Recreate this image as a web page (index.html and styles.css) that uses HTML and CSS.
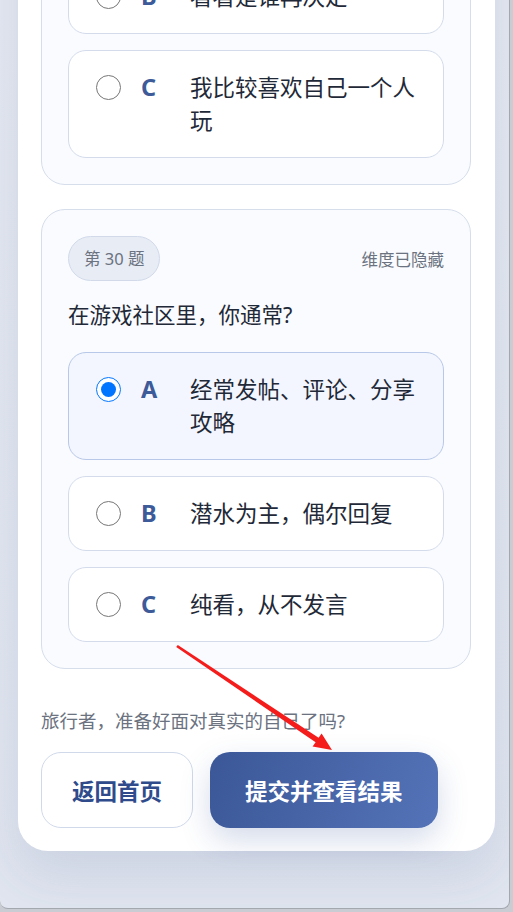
FILE: index.html
```html
<!DOCTYPE html>
<html lang="zh-CN">
<head>
    <meta charset="UTF-8">
    <meta name="viewport" content="width=device-width, initial-scale=1.0">
    <title>旅行者性格测试</title>
    <link rel="stylesheet" href="styles.css">
</head>
<body>

    <div class="window">
        <div class="panel">

            <!-- 第 29 题 -->
            <div class="question-card">
                <div class="q-head">
                    <div class="q-num">第 29 题</div>
                    <div class="q-dim">维度已隐藏</div>
                </div>
                <div class="q-text">组队打副本时，你更倾向于？</div>
                <div class="options">
                    <label class="option">
                        <input type="radio" name="q29">
                        <span class="opt-letter">A</span>
                        <span class="opt-text">主动担任指挥</span>
                    </label>
                    <label class="option">
                        <input type="radio" name="q29">
                        <span class="opt-letter">B</span>
                        <span class="opt-text">看看是谁再决定</span>
                    </label>
                    <label class="option">
                        <input type="radio" name="q29">
                        <span class="opt-letter">C</span>
                        <span class="opt-text">我比较喜欢自己一个人玩</span>
                    </label>
                </div>
            </div>

            <!-- 第 30 题 -->
            <div class="question-card">
                <div class="q-head">
                    <div class="q-num">第 30 题</div>
                    <div class="q-dim">维度已隐藏</div>
                </div>
                <div class="q-text">在游戏社区里，你通常?</div>
                <div class="options">
                    <label class="option selected">
                        <input type="radio" name="q30" checked>
                        <span class="opt-letter">A</span>
                        <span class="opt-text">经常发帖、评论、分享攻略</span>
                    </label>
                    <label class="option">
                        <input type="radio" name="q30">
                        <span class="opt-letter">B</span>
                        <span class="opt-text">潜水为主，偶尔回复</span>
                    </label>
                    <label class="option">
                        <input type="radio" name="q30">
                        <span class="opt-letter">C</span>
                        <span class="opt-text">纯看，从不发言</span>
                    </label>
                </div>
            </div>

            <p class="hint">旅行者，准备好面对真实的自己了吗?</p>

            <div class="actions">
                <button class="btn btn-back">返回首页</button>
                <button class="btn btn-submit">提交并查看结果</button>
            </div>
        </div>

        <!-- 红色标注箭头 -->
        <svg class="arrow" width="513" height="912" viewBox="0 0 513 912">
            <polygon fill="#f51c1c" points="176.2,647.0 177.8,645.0 318.6,737.8 321.6,733.4 332,750 312.6,746.6 315.6,742.2"/>
        </svg>
    </div>

</body>
</html>
```

FILE: styles.css
```css
* { box-sizing: border-box; }
body {
    margin: 0; background: #c9ccd3;
    font-family: "Noto Sans", "Noto Sans CJK SC", sans-serif; color: #1f2937;
}

/* JANELA */
.window {
    position: relative; width: 510px; height: 909px; overflow: hidden;
    background: linear-gradient(to bottom, #e5e9f2, #e0e5ef);
    border-right: 1px solid #a3a7ae; border-bottom: 1px solid #a3a7ae;
    border-radius: 0 0 8px 8px;
}

/* PAINEL BRANCO */
.panel {
    width: 477px; margin: -298px 0 0 18px;
    background: #fff; border-radius: 0 0 30px 30px;
    padding: 23px 24px 23px 23px;
    box-shadow: 0 22px 50px rgba(70, 90, 140, 0.14);
}

.question-card {
    background: #f9fbfe; border: 1px solid #d6deec; border-radius: 24px;
    padding: 26px; margin-bottom: 24px;
}
.question-card:last-of-type { margin-bottom: 0; }

.q-head { display: flex; justify-content: space-between; align-items: center; margin-bottom: 18px; }
.q-num {
    background: #e7ecf5; border: 1px solid #d2daea; border-radius: 999px;
    padding: 11px 15px; font-size: 16.5px; line-height: 21px; color: #6b7280;
}
.q-dim { font-size: 16.5px; color: #6b7280; }

.q-text { font-size: 21.5px; line-height: 31px; color: #1f2937; margin-bottom: 22px; }

/* OPCOES */
.options { display: flex; flex-direction: column; gap: 16px; }
.option {
    display: flex; align-items: flex-start;
    background: #fff; border: 1px solid #d4dcec; border-radius: 18px;
    padding: 20px 26px 20px 27px; cursor: pointer;
}
.option.selected { background: #f3f6fe; border-color: #b8c8e8; }
.option input { width: 25px; height: 25px; margin: 4px 20px 0 0; flex-shrink: 0; }
.opt-letter {
    width: 29px; margin-right: 20px; flex-shrink: 0;
    font-size: 23.5px; line-height: 33px; font-weight: 700; color: #3d5a99;
}
.opt-text { font-size: 22.5px; line-height: 33px; color: #1f2937; }

.hint { margin: 38px 0 18px; font-size: 18.5px; line-height: 27px; color: #6b7280; }

/* BOTOES */
.actions { display: flex; gap: 17px; }
.btn {
    height: 76px; border-radius: 20px; cursor: pointer;
    font-family: inherit; font-size: 22.5px; font-weight: 700;
}
.btn-back { background: #fff; border: 1.5px solid #d0d9ea; color: #2f4b8c; padding: 0 30px; }
.btn-submit {
    border: none; color: #fff; padding: 0 35px;
    background: linear-gradient(110deg, #3b5797, #5473b8);
    box-shadow: 0 12px 30px rgba(60, 90, 160, 0.22);
}

/* SETA */
.arrow { position: absolute; left: 0; top: 0; pointer-events: none; }
```
